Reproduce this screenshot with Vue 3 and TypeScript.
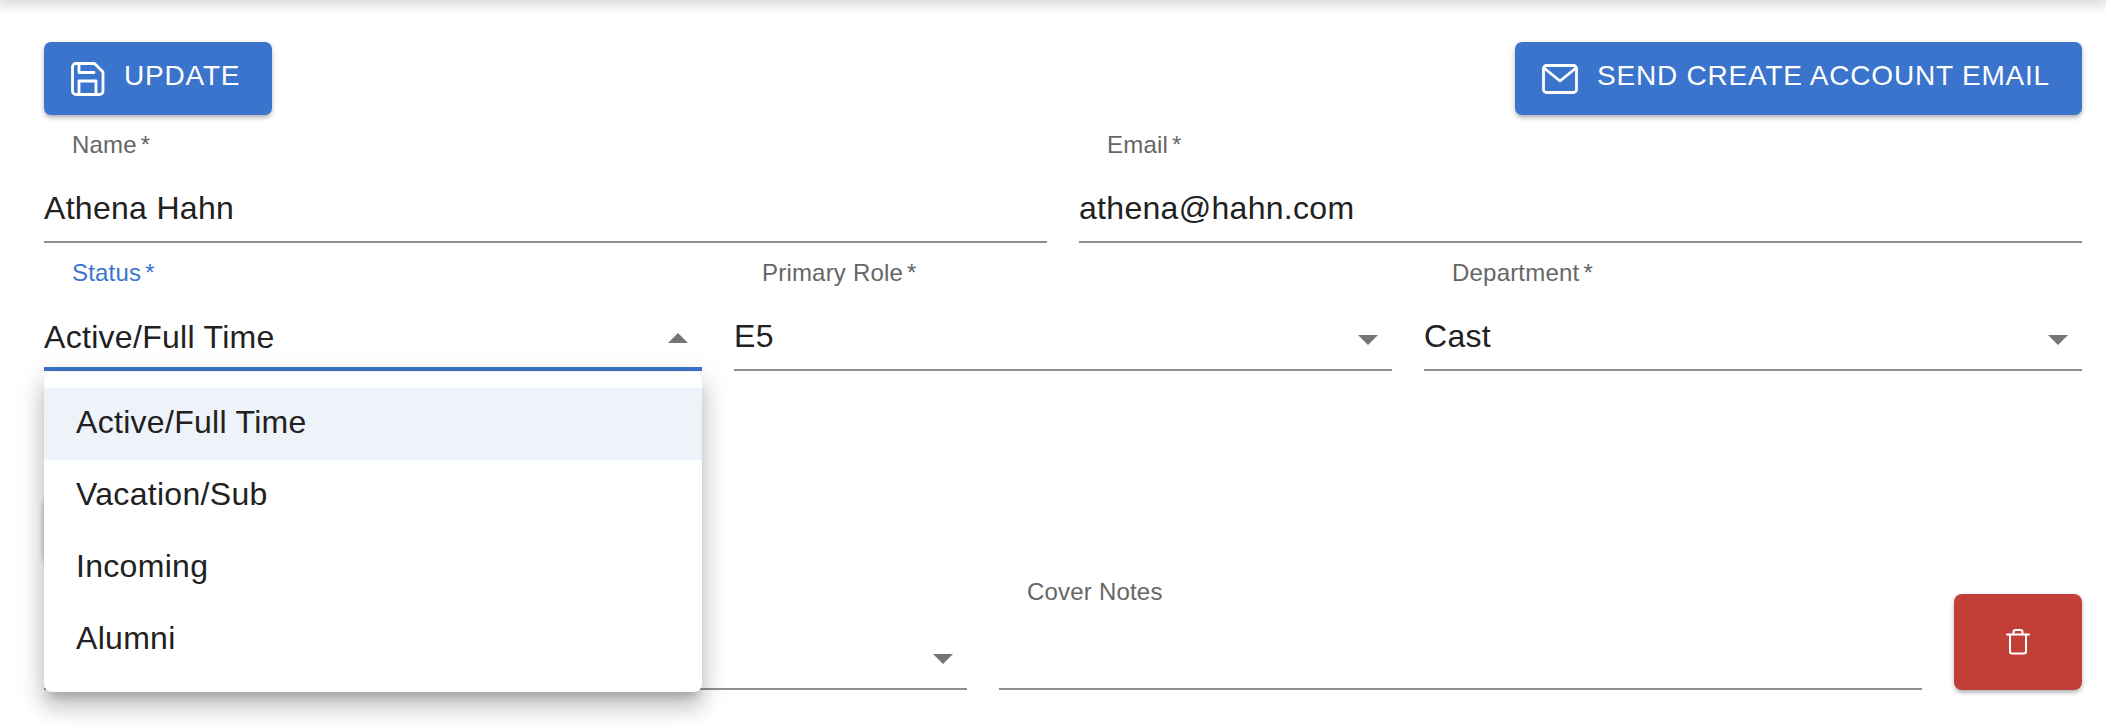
<script setup lang="ts">
const statusOptions: string[] = ['Active/Full Time', 'Vacation/Sub', 'Incoming', 'Alumni']
</script>

<template>
  <div class="page">
    <div class="appbar"></div>
    <main class="content">
      <div class="actions">
        <button class="btn" type="button">
          <svg class="icon-save" viewBox="0 0 34 34" fill="none" stroke="currentColor" stroke-width="2.8" stroke-linejoin="round" stroke-linecap="round">
            <path d="M5 1.5H23.5L32 10V29a3.5 3.5 0 0 1-3.5 3.5H5A3.5 3.5 0 0 1 1.5 29V5A3.5 3.5 0 0 1 5 1.5Z" />
            <path d="M8 2V10.5H23" />
            <path d="M8 32V19H25V32" />
          </svg>
          <span>UPDATE</span>
        </button>
        <button class="btn" type="button">
          <svg class="icon-mail" viewBox="0 0 36 30" fill="none" stroke="currentColor" stroke-width="2.8" stroke-linejoin="round" stroke-linecap="round">
            <rect x="1.5" y="1.5" width="33" height="27" rx="3" />
            <path d="M2 4L18 17L34 4" />
          </svg>
          <span>SEND CREATE ACCOUNT EMAIL</span>
        </button>
      </div>

      <div class="row">
        <div class="field">
          <label class="label">Name<i>*</i></label>
          <div class="control">Athena Hahn</div>
        </div>
        <div class="field">
          <label class="label">Email<i>*</i></label>
          <div class="control">athena@hahn.com</div>
        </div>
      </div>

      <div class="row">
        <div class="field focused">
          <label class="label">Status<i>*</i></label>
          <div class="control">
            Active/Full Time
            <span class="arrow up"></span>
          </div>
          <ul class="menu">
            <li v-for="(option, index) in statusOptions" :key="option" :class="{ selected: index === 0 }">{{ option }}</li>
          </ul>
        </div>
        <div class="field">
          <label class="label">Primary Role<i>*</i></label>
          <div class="control">E5<span class="arrow"></span></div>
        </div>
        <div class="field">
          <label class="label">Department<i>*</i></label>
          <div class="control">Cast<span class="arrow"></span></div>
        </div>
      </div>

      <div class="middle">
        <div class="covered"></div>
      </div>

      <div class="row">
        <div class="field">
          <label class="label">&nbsp;</label>
          <div class="control"><span class="arrow"></span></div>
        </div>
        <div class="field">
          <label class="label">Cover Notes</label>
          <div class="control"></div>
        </div>
        <button class="btn-delete" type="button" aria-label="Delete">
          <svg class="icon-trash" viewBox="0 0 24 26" fill="none" stroke="currentColor" stroke-width="2" stroke-linejoin="round" stroke-linecap="round">
            <path d="M1 5.5H23" />
            <path d="M4 5.5V22.5a2 2 0 0 0 2 2H18a2 2 0 0 0 2-2V5.5" />
            <path d="M7.5 5.5V3a2 2 0 0 1 2-2H14.5a2 2 0 0 1 2 2V5.5" />
          </svg>
        </button>
      </div>
    </main>
  </div>
</template>

<style>
html,
body {
  margin: 0;
  background: #fff;
}
</style>

<style scoped>
.page {
  height: 726px;
  overflow: hidden;
  position: relative;
  background: #fff;
  font-family: "Liberation Sans", Arial, sans-serif;
  color: #212121;
}

.appbar {
  height: 0;
  box-shadow: 0 0 12px 3px rgba(0, 0, 0, 0.28);
}

.content {
  padding: 42px 24px 0 44px;
  display: flex;
  flex-direction: column;
}

.actions {
  display: flex;
  justify-content: space-between;
  align-items: flex-start;
}

.btn {
  height: 73px;
  padding: 0 32px 0 27px;
  display: flex;
  align-items: center;
  gap: 19px;
  border: 0;
  border-radius: 7px;
  background: #3a74cc;
  color: #fff;
  font-family: inherit;
  font-size: 28px;
  letter-spacing: 0.8px;
  box-shadow: 0 3px 4px -1px rgba(0, 0, 0, 0.25), 0 2px 6px rgba(0, 0, 0, 0.14);
}

.btn span {
  position: relative;
  top: -3px;
}

.icon-save {
  width: 34px;
  height: 34px;
  flex: none;
}

.icon-mail {
  width: 36px;
  height: 30px;
  flex: none;
}

.row {
  display: flex;
  gap: 32px;
  align-items: flex-start;
}

.field {
  flex: 1 1 0;
  min-width: 0;
  height: 128px;
  position: relative;
  display: flex;
  flex-direction: column;
}

.label {
  margin: 15px 0 0 28px;
  line-height: 30px;
  font-size: 24px;
  letter-spacing: 0.2px;
  color: #666;
}

.label i {
  font-style: normal;
  margin-left: 4px;
}

.control {
  box-sizing: border-box;
  margin-top: auto;
  height: 69px;
  padding-top: 2px;
  display: flex;
  align-items: center;
  position: relative;
  font-size: 32px;
  letter-spacing: 0.3px;
  border-bottom: 2px solid #8f8f8f;
}

.focused .label {
  color: #3a74cc;
}

.focused .control {
  padding-top: 5px;
  border-bottom: 4px solid #3a74cc;
}

.arrow {
  position: absolute;
  right: 14px;
  top: 33px;
  width: 0;
  height: 0;
  border-left: 10px solid transparent;
  border-right: 10px solid transparent;
  border-top: 10px solid #757575;
}

.arrow.up {
  top: 31px;
  border-top: 0;
  border-bottom: 10px solid #757575;
}

.menu {
  position: absolute;
  z-index: 5;
  top: 129px;
  left: 0;
  right: 0;
  margin: 0;
  padding: 16px 0;
  list-style: none;
  background: #fff;
  border-radius: 8px;
  box-shadow: 0 10px 10px -6px rgba(0, 0, 0, 0.2), 0 16px 20px 2px rgba(0, 0, 0, 0.14), 0 6px 28px 4px rgba(0, 0, 0, 0.12);
}

.menu li {
  box-sizing: border-box;
  height: 72px;
  padding: 0 32px 3px;
  display: flex;
  align-items: center;
  font-size: 32px;
  letter-spacing: 0.3px;
}

.menu li.selected {
  background: #eef3fa;
}

.middle {
  height: 191px;
  padding-top: 126px;
  box-sizing: border-box;
}

.covered {
  width: 300px;
  height: 65px;
  border-radius: 8px;
  background: #e0e0e0;
  box-shadow: 0 2px 6px rgba(0, 0, 0, 0.3);
}

.btn-delete {
  flex: 0 0 128px;
  height: 96px;
  margin-top: 32px;
  display: flex;
  align-items: center;
  justify-content: center;
  border: 0;
  border-radius: 8px;
  background: #c13f36;
  color: #fff;
  box-shadow: 0 3px 4px -1px rgba(0, 0, 0, 0.25), 0 2px 6px rgba(0, 0, 0, 0.14);
}

.icon-trash {
  width: 24px;
  height: 26px;
}
</style>
